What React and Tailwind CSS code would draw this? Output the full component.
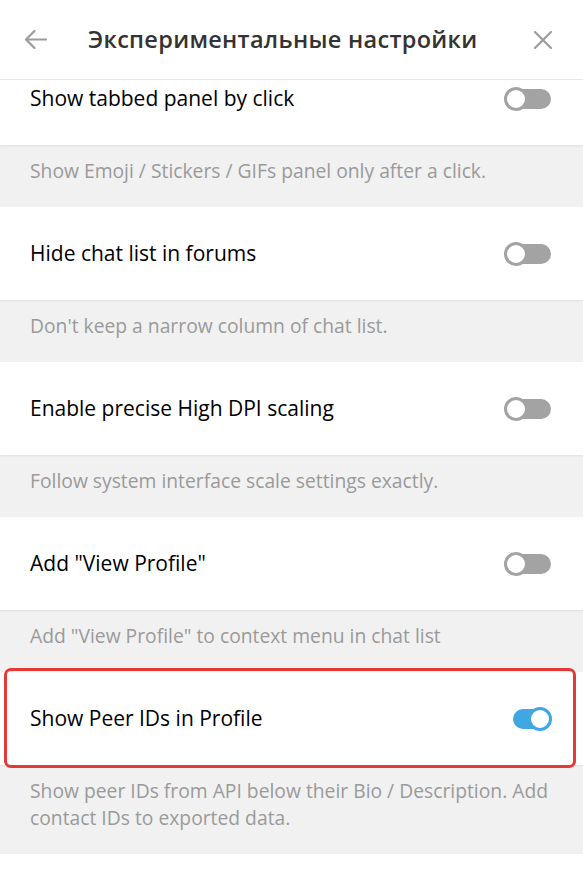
import React from 'react';

const settings = [
  {
    label: 'Show tabbed panel by click',
    desc: 'Show Emoji / Stickers / GIFs panel only after a click.',
  },
  {
    label: 'Hide chat list in forums',
    desc: "Don't keep a narrow column of chat list.",
  },
  {
    label: 'Enable precise High DPI scaling',
    desc: 'Follow system interface scale settings exactly.',
  },
  {
    label: 'Add "View Profile"',
    desc: 'Add "View Profile" to context menu in chat list',
  },
  {
    label: 'Show Peer IDs in Profile',
    desc: 'Show peer IDs from API below their Bio / Description. Add contact IDs to exported data.',
    on: true,
    marked: true,
  },
];

const Toggle = ({ on }) => (
  <div className="relative w-[47px] h-[26px] flex items-center">
    <div className={`absolute left-[9px] right-0 h-[20px] rounded-full ${on ? 'bg-[#40a7e3]' : 'bg-[#a3a3a3]'}`} />
    <div
      className={`absolute w-[24px] h-[24px] rounded-full bg-white border-[3px] ${
        on ? 'right-[-1px] border-[#40a7e3]' : 'left-0 border-[#a3a3a3]'
      }`}
    />
  </div>
);

const Row = ({ item }) => (
  <div>
    <div className="relative bg-white h-[93px] flex items-center justify-between pl-[30px] pr-[32px] shadow-[0_1px_2px_rgba(0,0,0,0.08)]">
      <span className="text-[21px] text-black">{item.label}</span>
      <Toggle on={item.on} />
      {item.marked && (
        <div className="absolute top-[-4px] bottom-[-3px] left-[4px] right-[7px] border-[3px] border-[#e53935] rounded-[7px]" />
      )}
    </div>
    <div className="bg-[#f1f1f1] pl-[30px] pr-[16px] pt-[12px] pb-[23px] text-[19.3px] leading-[27px] text-[#9a9a9a]">
      {item.desc}
    </div>
  </div>
);

export default function App() {
  return (
    <div
      className="w-[583px] h-[877px] bg-white flex flex-col overflow-hidden"
      style={{ fontFamily: '"Open Sans", "Noto Sans", sans-serif' }}
    >
      <div className="h-[80px] shrink-0 flex items-center border-b border-[#e6e6e6] px-[24px] bg-white relative z-10">
        <svg width="23" height="21" viewBox="0 0 23 21" fill="none" stroke="#9c9c9c" strokeWidth="2.2" strokeLinecap="round" strokeLinejoin="round">
          <path d="M22 10.5H2M10.5 2L2 10.5 10.5 19" />
        </svg>
        <h1 className="ml-[41px] flex-1 text-[23.5px] font-semibold text-[#333] tracking-[0.3px]">
          Экспериментальные настройки
        </h1>
        <svg width="20" height="20" viewBox="0 0 20 20" fill="none" stroke="#9c9c9c" strokeWidth="2.2" strokeLinecap="round" className="mr-[6px]">
          <path d="M2 2L18 18M18 2L2 18" />
        </svg>
      </div>
      <div className="flex-1 overflow-hidden">
        <div className="-mt-[28px]">
          {settings.map((item) => (
            <Row key={item.label} item={item} />
          ))}
        </div>
      </div>
    </div>
  );
}
